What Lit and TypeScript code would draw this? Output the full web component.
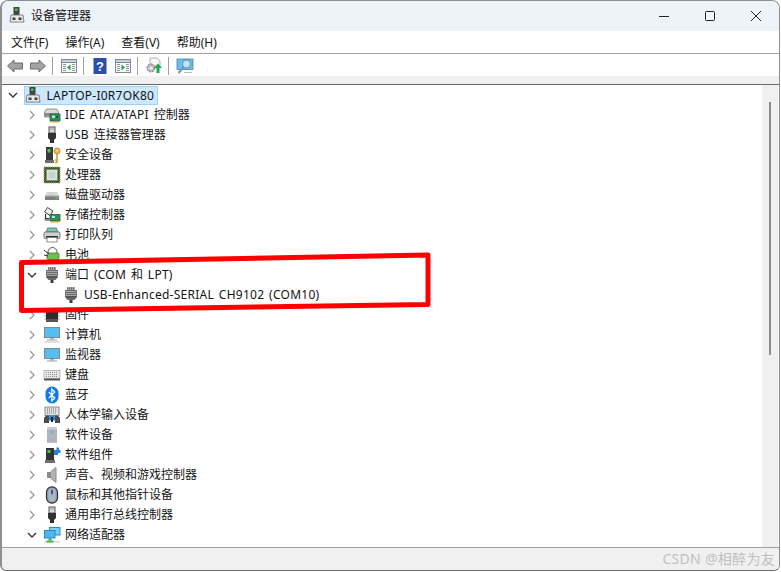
import { LitElement, html, css, svg } from "lit";
import { customElement } from "lit/decorators.js";

const portIcon = svg`<rect x="5" y="1" width="8" height="3" fill="#a8a8a8"/><path d="M5.500 1.500v2M7.500 1.500v2M9.500 1.500v2M11.500 1.500v2" stroke="#666"/><path d="M3 4h12v7l-2.500 3h-7L3 11z" fill="#6a6a6a"/><path d="M3.500 5.500h11M3.500 7.500h11M3.500 9.500h11" stroke="#a6a6a6"/><path d="M4 11h10" stroke="#444"/><rect x="7.500" y="14" width="3" height="3" fill="#3c3c3c"/>`;
const usbIcon = svg`<rect x="6" y="1" width="6" height="6" fill="#dcdcdc" stroke="#555"/><path d="M7.500 3h1M9.500 3h1" stroke="#555"/><path d="M5 7h8v5l-2 2v3H7v-3l-2-2z" fill="#333"/>`;

const icons: Record<string, any> = {
  computer: svg`<rect x="5.500" y="1" width="6" height="8" fill="#444"/><rect x="7" y="2.500" width="2.500" height="2.500" fill="#35d043"/><path d="M3 9h12l1 7H2z" fill="#e9e9e9" stroke="#6a6a6a" stroke-width=".8"/><rect x="4.500" y="11.500" width="3" height="2.500" fill="#444"/><rect x="10.500" y="11.500" width="3" height="2.500" fill="#444"/>`,
  ide: svg`<path d="M3.500 3h10l2 3v5h-14V6z" fill="#d9d9d9" stroke="#7a7a7a" stroke-width=".8"/><rect x="1.500" y="7" width="14" height="3.500" fill="#8c8c8c"/><rect x="7" y="8" width="10" height="7" fill="#2f8a5c" stroke="#1f6a44" stroke-width=".8"/><rect x="9" y="9.500" width="3" height="2.500" fill="#c4e6cf"/><rect x="13" y="10" width="2" height="2" fill="#163"/><path d="M8 15h8v1.500H8z" fill="#cfa32e"/>`,
  usb: usbIcon,
  security: svg`<rect x="3" y="1" width="7" height="13" fill="#3a3a3a"/><rect x="4.500" y="3" width="3" height="3.500" fill="#35d043"/><path d="M2 14h9v3H2z" fill="#6e6e6e"/><circle cx="14" cy="5" r="3" fill="#edbc45" stroke="#b08420" stroke-width=".8"/><circle cx="14" cy="4.500" r=".8" fill="#fff"/><path d="M14 8v9M14 14h-2M14 16.500h-2" fill="none" stroke="#c99a2a" stroke-width="1.500"/>`,
  cpu: svg`<rect x="1" y="1" width="16" height="16" fill="#3f5f36"/><rect x="1" y="1" width="16" height="16" fill="none" stroke="#b59e3c" stroke-dasharray="1 1"/><rect x="3.500" y="3.500" width="11" height="11" fill="#dfe6e0" stroke="#76907c"/><rect x="5.500" y="5.500" width="7" height="7" fill="#c9d2cc"/>`,
  disk: svg`<path d="M4 6h10l2 4H2z" fill="#d6d6d6"/><path d="M2 10h14v4H2z" fill="#7f7f7f"/><path d="M2 10h14" stroke="#aaa"/><rect x="12.500" y="11.500" width="2" height="1.300" fill="#55dd55"/>`,
  storage: svg`<path d="M4.500 1.500L10 5 7 9.500 1.500 6z" fill="#eee" stroke="#444"/><path d="M2.500 8v4.500h4M1.500 14h5" fill="none" stroke="#333" stroke-width="1.200"/><rect x="7" y="8.500" width="10" height="6.500" fill="#2f8a5c" stroke="#1f6a44" stroke-width=".8"/><rect x="9" y="10" width="3" height="2" fill="#c4e6cf"/><path d="M8 15h8v1.500H8z" fill="#cfa32e"/>`,
  printer: svg`<path d="M4.500 2h9l1 4h-11z" fill="#6fcfa8" stroke="#666" stroke-width=".8"/><rect x="1" y="6" width="16" height="6.500" rx="1" fill="#cfcfcf" stroke="#666" stroke-width=".8"/><rect x="3" y="10" width="12" height="2" fill="#333"/><rect x="4" y="11.500" width="10" height="4.500" fill="#fff" stroke="#777" stroke-width=".8"/>`,
  battery: svg`<circle cx="9.500" cy="6" r="4.500" fill="#fff" stroke="#555"/><rect x="4" y="7" width="12" height="6.500" rx="1.500" fill="#6cc04f" stroke="#3f7f32" stroke-width=".8"/><path d="M1 4l5 4M1 9l4 1" stroke="#333"/>`,
  port: portIcon,
  chip: svg`<rect x="3" y="2" width="12" height="14" fill="#2e2e2e"/><path d="M1.500 4h1.500M1.500 7h1.500M1.500 10h1.500M1.500 13h1.500M15 4h1.500M15 7h1.500M15 10h1.500M15 13h1.500" stroke="#8a8a8a"/><rect x="3" y="13" width="12" height="3" fill="#555"/>`,
  monitor: svg`<rect x="1.500" y="1.500" width="15" height="10" fill="#56bdf0" stroke="#7c8a96"/><rect x="7" y="12" width="4" height="1.500" fill="#aab3bb"/><rect x="4" y="13.500" width="10" height="1" fill="#9aa3ab"/><rect x="1" y="15.500" width="16" height="1" fill="#bcc3c9"/>`,
  display: svg`<rect x="1.500" y="2.500" width="15" height="10" fill="#56bdf0" stroke="#7c8a96"/><rect x="7" y="13" width="4" height="1.500" fill="#aab3bb"/><rect x="4" y="14.500" width="10" height="1" fill="#9aa3ab"/>`,
  keyboard: svg`<rect x="1" y="4.500" width="16" height="8" fill="#e8e8e8" stroke="#aaa" stroke-width=".8"/><path d="M3 6.500h12M3 8.500h12M3 10.500h12" stroke="#8f8f8f" stroke-dasharray="1 1"/><rect x="1" y="12.500" width="16" height="2" fill="#555"/>`,
  bluetooth: svg`<rect x="2.500" y=".500" width="13" height="17" rx="6.500" fill="#0f78ea"/><path d="M5.800 6l6 6-3 3V3l3 3-6 6" fill="none" stroke="#fff" stroke-width="1.200"/>`,
  hid: svg`<rect x="2" y="1" width="14" height="8.500" fill="#e2e2e2" stroke="#777" stroke-width=".8"/><path d="M4 3h10M4 5h10M4 7h10" stroke="#777" stroke-dasharray="1 1"/><path d="M1 17v-5l2-2.500h3V17zM17 17v-5l-2-2.500h-3V17z" fill="#4a4a4a"/><path d="M6.500 9.500h5l1 5h-7z" fill="#2f7fd0"/><rect x="8" y="11" width="2" height="5" fill="#222"/>`,
  softdev: svg`<path d="M4 1.500h10v15H4z" fill="#9aa3aa"/><path d="M5.500 1.500h7l1.500 2v13H4v-13z" fill="#aeb5ba"/><path d="M4 1.500h10v2H4z" fill="#c8cdd0"/><rect x="8" y="5" width="2" height="2" fill="#38cfd0"/>`,
  softcomp: svg`<rect x="3" y="2" width="8" height="12" fill="#333"/><rect x="4.500" y="4" width="3" height="3" fill="#35d043"/><path d="M2 14h10v3H2z" fill="#6e6e6e"/><path d="M11 4h2.500V1.500h2.500V4h1.500v3H15v2h-4z" fill="#2a80da"/>`,
  sound: svg`<path d="M7.500 6L13 1.500v15L7.500 12z" fill="#b4b4b4" stroke="#8a8a8a"/><rect x="4" y="6" width="3.500" height="6" fill="#8c8c8c"/>`,
  mouse: svg`<rect x="3.500" y=".800" width="11" height="16.400" rx="5.500" fill="#8ea2b8" stroke="#2e2e2e" stroke-width="1.200"/><rect x="5.500" y="2.500" width="7" height="13" rx="3.500" fill="#a9b8c8"/><rect x="8" y="3.500" width="2" height="5" rx="1" fill="#46566c"/>`,
  network: svg`<rect x="6.500" y="1.500" width="10.500" height="7.500" fill="#7ccbf0" stroke="#2f88c0"/><rect x="1.500" y="4.500" width="10.500" height="7.500" fill="#4db8ee" stroke="#2f88c0"/><rect x="5.500" y="12.500" width="3" height="2" fill="#3ea83e"/><path d="M1 15h16v1.500H1z" fill="#d8d8d8"/><rect x="3.500" y="14.500" width="7" height="2" fill="#47b347"/>`,
};

type Row = { level: number; arrow: "open" | "closed" | "none"; icon: string; text: string; selected?: boolean };

const rows: Row[] = [
  { level: 0, arrow: "open", icon: "computer", text: "LAPTOP-I0R7OK80", selected: true },
  { level: 1, arrow: "closed", icon: "ide", text: "IDE ATA/ATAPI 控制器" },
  { level: 1, arrow: "closed", icon: "usb", text: "USB 连接器管理器" },
  { level: 1, arrow: "closed", icon: "security", text: "安全设备" },
  { level: 1, arrow: "closed", icon: "cpu", text: "处理器" },
  { level: 1, arrow: "closed", icon: "disk", text: "磁盘驱动器" },
  { level: 1, arrow: "closed", icon: "storage", text: "存储控制器" },
  { level: 1, arrow: "closed", icon: "printer", text: "打印队列" },
  { level: 1, arrow: "closed", icon: "battery", text: "电池" },
  { level: 1, arrow: "open", icon: "port", text: "端口 (COM 和 LPT)" },
  { level: 2, arrow: "none", icon: "port", text: "USB-Enhanced-SERIAL CH9102 (COM10)" },
  { level: 1, arrow: "closed", icon: "chip", text: "固件" },
  { level: 1, arrow: "closed", icon: "monitor", text: "计算机" },
  { level: 1, arrow: "closed", icon: "display", text: "监视器" },
  { level: 1, arrow: "closed", icon: "keyboard", text: "键盘" },
  { level: 1, arrow: "closed", icon: "bluetooth", text: "蓝牙" },
  { level: 1, arrow: "closed", icon: "hid", text: "人体学输入设备" },
  { level: 1, arrow: "closed", icon: "softdev", text: "软件设备" },
  { level: 1, arrow: "closed", icon: "softcomp", text: "软件组件" },
  { level: 1, arrow: "closed", icon: "sound", text: "声音、视频和游戏控制器" },
  { level: 1, arrow: "closed", icon: "mouse", text: "鼠标和其他指针设备" },
  { level: 1, arrow: "closed", icon: "usb", text: "通用串行总线控制器" },
  { level: 1, arrow: "open", icon: "network", text: "网络适配器" },
];

const menus = ["文件(F)", "操作(A)", "查看(V)", "帮助(H)"];

const runs = (t: string) =>
  t.split(/([\x20-\x7e]+)/).filter(Boolean).map((p) => (/^[\x20-\x7e]/.test(p) ? html`<span class="lat">${p}</span>` : p));

const panel = (side: "left" | "right") => svg`<rect x="1.500" y="2.500" width="15" height="13" fill="#f6f8fa" stroke="#7f8a94"/><rect x="1.500" y="2.500" width="15" height="3" fill="#c5d0da" stroke="#7f8a94"/><path d="M3 7.500h3M3 9.500h3M3 11.500h3M3 13.500h3M12 7.500h3M12 9.500h3M12 11.500h3M12 13.500h3" stroke="#8f99a3"/>${side === "left" ? svg`<path d="M10.500 7.500v6L7 10.500z" fill="#1fa64a"/>` : svg`<path d="M7.500 7.500v6l3.500-3z" fill="#1fa64a"/>`}`;

@customElement("app-root")
export class AppRoot extends LitElement {
  static styles = css`
    :host { display: block; width: 781px; height: 572px; position: relative; overflow: hidden; background: #fff;
      font-family: "Noto Sans", "Noto Sans CJK SC", sans-serif; font-size: 12px; color: #141414; }
    .win { width: 780px; height: 571px; box-sizing: border-box; border: 1px solid #8f8f8f; border-bottom-color: #6e6e6e; border-left-width: 2px;
      border-radius: 8px 8px 6px 6px; overflow: hidden; display: flex; flex-direction: column; background: #f0f0f0; }
    .title { height: 30px; box-sizing: border-box; padding: 0 0 2px 6px; flex: none; background: #eef2f9; display: flex; align-items: center; gap: 5px; }
    .title svg { flex: none; }
    .caption { margin: 2px 0 0 auto; display: flex; align-items: center; }
    .cbtn { width: 46px; height: 28px; display: flex; align-items: center; justify-content: center; }
    .menu { height: 22px; flex: none; background: #fff; border-bottom: 1px solid #a0a0a8; display: flex; align-items: center; padding-left: 9px; gap: 17px; }
    .toolbar { height: 22px; flex: none; background: #fff; display: flex; align-items: center; padding-left: 1px; }
    .tb { width: 23px; height: 22px; display: flex; align-items: center; justify-content: center; padding-top: 2px; box-sizing: border-box; }
    .sep { width: 1px; height: 18px; background: #a0a0a0; margin: 2px 4px 0 3px; }
    .gap { height: 8px; flex: none; background: #f0f0f0; border-bottom: 1px solid #696969; }
    .body { flex: 1; min-height: 0; display: flex; background: #fff; }
    .tree { flex: 1; min-width: 0; overflow: hidden; }
    .row { height: 20px; display: flex; align-items: center; white-space: nowrap; }
    .arrow { width: 17px; height: 20px; flex: none; box-sizing: border-box; padding-left: 1px; display: flex; align-items: center; }
    .ico { width: 18px; height: 18px; flex: none; }
    .label { margin-left: 2px; line-height: 18px; padding: 0 2px; }
    .lat { letter-spacing: .25px; word-spacing: 1.5px; }
    .row.sel .label { background: #cce8ff; border: 1px solid #99d1ff; margin-left: -18px; padding: 0 3px 0 21.5px; line-height: 17px; }
    .row.sel .ico { position: relative; z-index: 1; }
    .lvl0 { padding-left: 5px; }
    .lvl1 { padding-left: 24px; }
    .lvl2 { padding-left: 60px; }
    .scroll { width: 16px; flex: none; background: #f0f0f0; display: flex; justify-content: center; margin-right: 1px; padding-top: 17px; }
    .thumb { width: 2px; height: 253px; background: #8a8a8a; }
    .status { height: 22px; flex: none; background: #f0f0f0; border-top: 1px solid #a0a0a0; }
    .redbox { position: absolute; left: 0; top: 0; pointer-events: none; }
    .mark { position: absolute; right: 6px; bottom: 4px; font-size: 14px; letter-spacing: .3px; color: rgba(140,140,140,.5); }
  `;

  render() {
    return html`
      <div class="win">
        <div class="title">
          <svg width="18" height="18" viewBox="0 0 18 18">${icons.computer}</svg><span>设备管理器</span>
          <div class="caption">
            <div class="cbtn"><svg width="12" height="12" viewBox="0 0 12 12"><path d="M1 6.500h10" stroke="#222"/></svg></div>
            <div class="cbtn"><svg width="12" height="12" viewBox="0 0 12 12"><rect x="1.500" y="1.500" width="9" height="9" rx="1" fill="none" stroke="#222"/></svg></div>
            <div class="cbtn"><svg width="12" height="12" viewBox="0 0 12 12"><path d="M1 1l10 10M11 1L1 11" stroke="#222" fill="none"/></svg></div>
          </div>
        </div>
        <div class="menu">${menus.map((m) => html`<span>${m}</span>`)}</div>
        <div class="toolbar">
          <div class="tb"><svg width="18" height="18" viewBox="0 0 18 18"><path d="M1.500 9l6.500-6v3h8.500v6H8v3z" fill="#a3a3a3" stroke="#6a6a6a"/></svg></div>
          <div class="tb"><svg width="18" height="18" viewBox="0 0 18 18"><path d="M16.500 9L10 3v3H1.500v6H10v3z" fill="#a3a3a3" stroke="#6a6a6a"/></svg></div>
          <div class="sep"></div>
          <div class="tb"><svg width="18" height="18" viewBox="0 0 18 18">${panel("left")}</svg></div>
          <div class="sep"></div>
          <div class="tb"><svg width="18" height="18" viewBox="0 0 18 18"><rect x="2.500" y="1" width="13" height="16" fill="#2d4ea6"/><text x="9" y="14" text-anchor="middle" font-size="13" font-weight="700" fill="#fff" font-family="Liberation Sans">?</text></svg></div>
          <div class="tb"><svg width="18" height="18" viewBox="0 0 18 18">${panel("right")}</svg></div>
          <div class="sep"></div>
          <div class="tb"><svg width="18" height="18" viewBox="0 0 18 18"><path d="M5 1h7l3 3v6H5z" fill="#f6f6f6" stroke="#b0b0b0"/><circle cx="6" cy="11" r="4" fill="#bdbdbd" stroke="#777" stroke-dasharray="2 1"/><circle cx="6" cy="11" r="1.500" fill="#eee"/><path d="M13 6.500l4 4.500h-2.500v5h-3v-5H9z" fill="#1fa64a"/></svg></div>
          <div class="sep"></div>
          <div class="tb"><svg width="18" height="18" viewBox="0 0 18 18"><rect x="1" y="2" width="16" height="10.500" fill="#62c2ee" stroke="#5a7f99" stroke-width=".8"/><circle cx="10.500" cy="7" r="4" fill="#bfe6f8" stroke="#6c8ea3"/><path d="M7.500 10l-5 6" stroke="#7d98a8" stroke-width="2"/><path d="M8 15.500h8" stroke="#b8c0c6"/></svg></div>
        </div>
        <div class="gap"></div>
        <div class="body">
          <div class="tree">
            ${rows.map((r) => html`
              <div class="row lvl${r.level} ${r.selected ? "sel" : ""}">
                ${r.arrow !== "none" ? html`<div class="arrow">
                  ${r.arrow === "open"
                    ? html`<svg width="10" height="10" viewBox="0 0 10 10"><path d="M1 3l4 4 4-4" fill="none" stroke="#333" stroke-width="1.300"/></svg>`
                    : html`<svg width="10" height="10" viewBox="0 0 10 10"><path d="M3 1l4 4-4 4" fill="none" stroke="#999" stroke-width="1.300"/></svg>`}
                </div>` : ""}
                <svg class="ico" viewBox="0 0 18 18">${icons[r.icon]}</svg>
                <span class="label">${runs(r.text)}</span>
              </div>`)}
          </div>
          <div class="scroll"><div class="thumb"></div></div>
        </div>
        <div class="status"></div>
      </div>
      <svg class="redbox" width="781" height="572"><path d="M21.500 262.500L428 255L428 304.500L21.500 310.500z" fill="none" stroke="#f00" stroke-width="5" stroke-linejoin="round"/></svg>
      <div class="mark">CSDN @相醉为友</div>
    `;
  }
}
